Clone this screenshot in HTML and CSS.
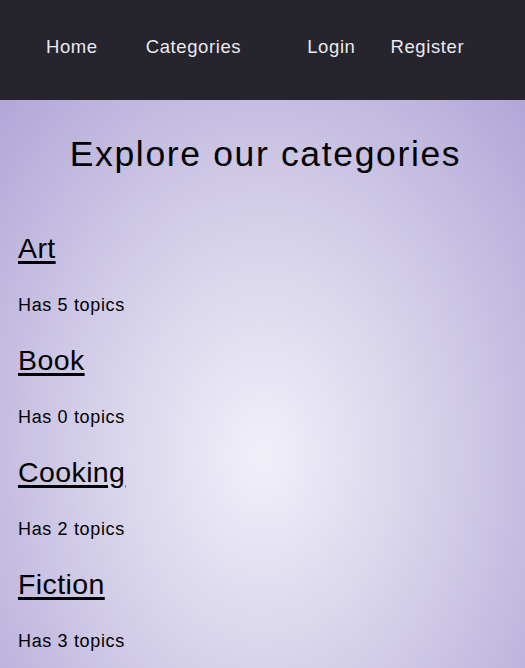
FILE: index.html
```html
<!DOCTYPE html>
<html lang="en">
<head>
<meta charset="utf-8">
<title>Categories</title>
<link rel="stylesheet" href="styles.css">
</head>
<body>
<nav class="nav">
  <div class="nav-group nav-left">
    <a class="nav-link" href="#">Home</a>
    <a class="nav-link" href="#">Categories</a>
  </div>
  <div class="nav-group nav-right">
    <a class="nav-link" href="#">Login</a>
    <a class="nav-link" href="#">Register</a>
  </div>
</nav>
<main class="main">
  <h1 class="title">Explore our categories</h1>
  <section class="category">
    <h2 class="cat-name"><a href="#">Art</a></h2>
    <p class="cat-count">Has 5 topics</p>
  </section>
  <section class="category">
    <h2 class="cat-name"><a href="#">Book</a></h2>
    <p class="cat-count">Has 0 topics</p>
  </section>
  <section class="category">
    <h2 class="cat-name"><a href="#">Cooking</a></h2>
    <p class="cat-count">Has 2 topics</p>
  </section>
  <section class="category">
    <h2 class="cat-name"><a href="#">Fiction</a></h2>
    <p class="cat-count">Has 3 topics</p>
  </section>
</main>
</body>
</html>
```
FILE: styles.css
```css
html, body {
  margin: 0;
  padding: 0;
}
body {
  font-family: "Liberation Sans", Arial, sans-serif;
  color: #000;
  background: #b3a8d8;
}
.nav {
  height: 100px;
  background: #26242d;
  display: flex;
  align-items: center;
  padding-left: 46px;
  box-sizing: border-box;
}
.nav-group {
  display: flex;
}
.nav-left {
  gap: 48px;
}
.nav-right {
  gap: 35px;
  margin-left: 66px;
}
.nav-link {
  color: #ebe9f0;
  text-decoration: none;
  font-size: 18.5px;
  letter-spacing: 0.6px;
  line-height: 22px;
  margin-top: -6px;
}
.main {
  min-height: 710px;
  padding: 32px 18px 40px;
  box-sizing: border-box;
  background: radial-gradient(ellipse at 50% 50%, #f1f0f9 0%, #d6d1ea 45%, #b2a6d7 100%);
}
.title {
  margin: 0 0 55px;
  padding-left: 6px;
  text-align: center;
  font-weight: normal;
  font-size: 35.5px;
  letter-spacing: 1.65px;
  line-height: 44px;
}
.category {
  margin-bottom: 27px;
}
.cat-name {
  margin: 0;
  font-weight: normal;
  font-size: 28.5px;
  letter-spacing: 0.4px;
  line-height: 34px;
}
.cat-name a {
  color: #000;
  text-decoration: underline;
  text-decoration-thickness: 3px;
  text-underline-offset: 3px;
}
.cat-count {
  margin: 29px 0 0;
  font-size: 18px;
  letter-spacing: 0.65px;
  line-height: 22px;
}
```
